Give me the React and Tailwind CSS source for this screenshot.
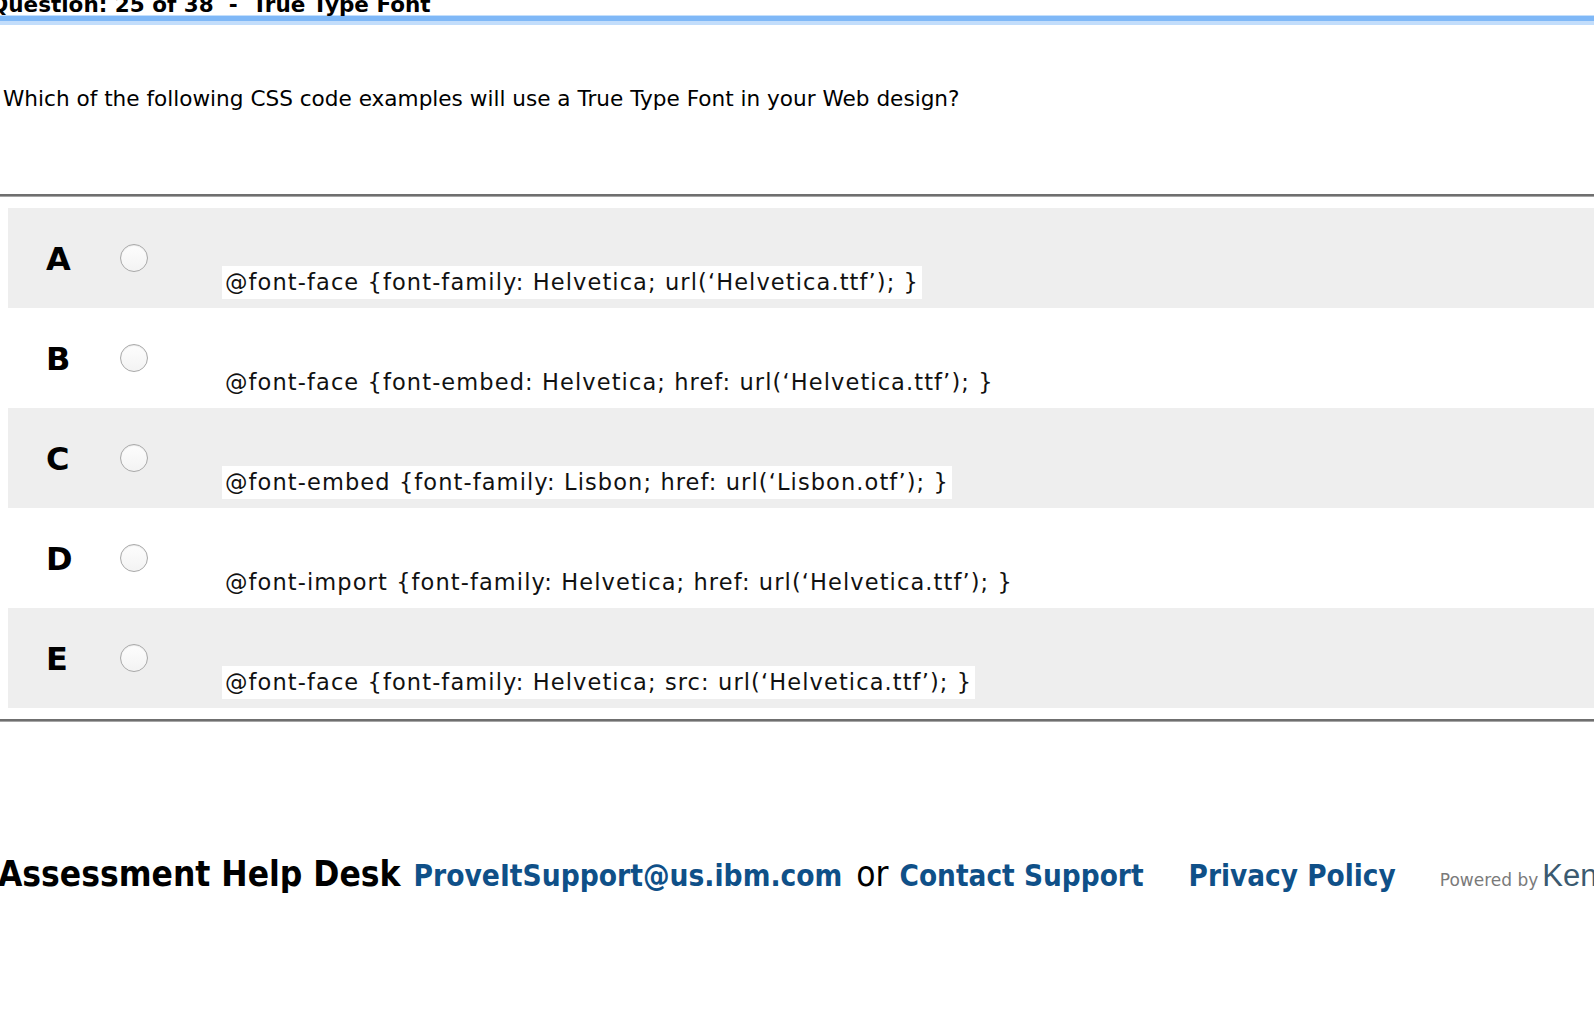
import React from "react";

const options = [
  { key: "A", code: "@font-face {font-family: Helvetica; url(‘Helvetica.ttf’); }" },
  { key: "B", code: "@font-face {font-embed: Helvetica; href: url(‘Helvetica.ttf’); }" },
  { key: "C", code: "@font-embed {font-family: Lisbon; href: url(‘Lisbon.otf’); }" },
  { key: "D", code: "@font-import {font-family: Helvetica; href: url(‘Helvetica.ttf’); }" },
  { key: "E", code: "@font-face {font-family: Helvetica; src: url(‘Helvetica.ttf’); }" },
];

function Radio() {
  return (
    <div className="w-[28px] h-[28px] rounded-full border border-[#a9a9a9] bg-gradient-to-b from-[#fdfdfd] to-[#f3f3f3] shadow-[inset_0_1px_1px_rgba(0,0,0,0.08)]" />
  );
}

function OptionRow({ opt, shaded }) {
  return (
    <div className={`flex h-[100px] ml-[8px] ${shaded ? "bg-[#eeeeee]" : "bg-white"}`}>
      <div className="w-[112px] pl-[38px] pt-[35px] text-[32px] leading-[32px] font-bold text-black">
        {opt.key}
      </div>
      <div className="pt-[36px]">
        <Radio />
      </div>
      <div className="pl-[74px] pt-[58px]">
        <span className="inline-block bg-white h-[33px] pl-[3px] pr-[3px] text-[22.5px] leading-[33px] tracking-[1.1px] text-[#111] whitespace-pre">
          {opt.code}
        </span>
      </div>
    </div>
  );
}

export default function App() {
  return (
    <div className="w-full h-screen overflow-hidden bg-white text-black font-['DejaVu_Sans',Verdana,sans-serif]">
      {/* title bar, scrolled partly off screen */}
      <div className="-mt-[6px] -ml-[10px] text-[21.5px] leading-[21px] font-bold whitespace-pre">
        Question: 25 of 38  -  True Type Font
      </div>
      <div className="h-px bg-[#c4dffb]" />
      <div className="h-[5px] bg-[#7fb8f7]" />
      <div className="h-[4px] bg-[#c2ddfb]" />

      <div className="mt-[61px] pl-[3px] text-[21.6px] leading-[26px]">
        Which of the following CSS code examples will use a True Type Font in your Web design?
      </div>

      <div className="mt-[82px] border-t-2 border-[#6f6f6f] border-b border-b-[#a6a6a6]" />

      <div className="mt-[11px]">
        {options.map((o, i) => (
          <OptionRow key={o.key} opt={o} shaded={i % 2 === 0} />
        ))}
      </div>

      <div className="mt-[11px] border-t-2 border-[#6f6f6f] border-b border-b-[#a6a6a6]" />

      {/* footer */}
      <div className="mt-[126px] -ml-[2px] flex items-baseline whitespace-nowrap font-['DejaVu_Sans_Condensed','DejaVu_Sans',sans-serif]">
        <span className="text-[35px] font-bold text-black">Assessment Help Desk</span>
        <span className="ml-[13px] text-[29.6px] font-bold text-[#0f5088]">ProveItSupport@us.ibm.com</span>
        <span className="ml-[14px] text-[35px] text-black">or</span>
        <span className="ml-[11px] text-[29.4px] font-bold text-[#0f5088]">Contact Support</span>
        <span className="ml-[45px] text-[29.4px] font-bold text-[#0f5088]">Privacy Policy</span>
        <span className="ml-[44px] text-[17px] text-[#7a7a7a] font-['DejaVu_Sans',sans-serif]">Powered by</span>
        <span className="ml-[4px] text-[31px] text-[#3b5a70] font-['Liberation_Sans',sans-serif]">Kenexa</span>
      </div>
    </div>
  );
}
